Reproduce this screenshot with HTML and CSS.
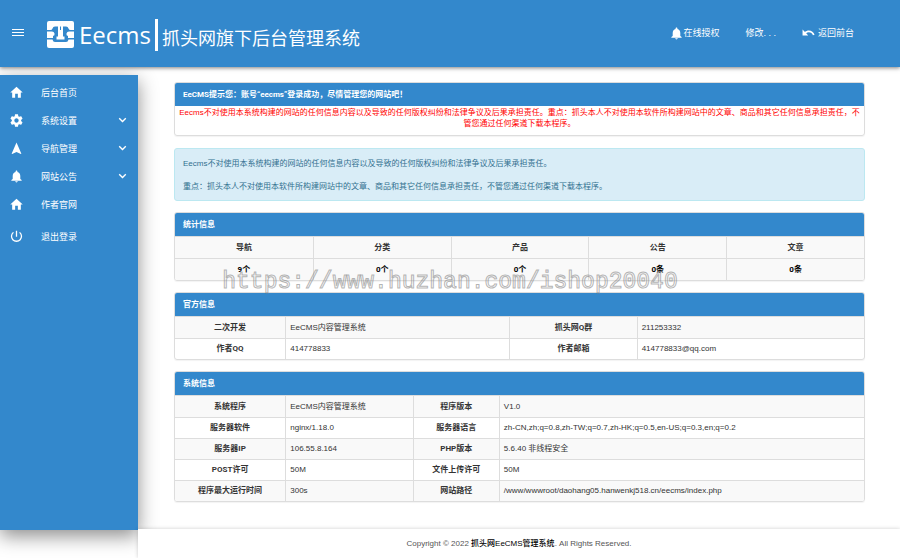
FILE: index.html
```html
<!DOCTYPE html>
<html lang="zh-CN">
<head>
  <meta charset="UTF-8">
  <meta name="viewport" content="width=device-width, initial-scale=1">
  <title>Eecms后台管理系统</title>
  <link rel="stylesheet" href="styles.css">
</head>
<body>
  <!-- Icons -->
  <svg width="0" height="0" class="sprite">
    <symbol id="i-home" viewBox="0 0 24 24"><path d="M9.500 21.500v-7h5v7h5.500V12h3.500L12 1.500.5 12H4v9.500z"/></symbol>
    <symbol id="i-gear" viewBox="1.500 1.500 21 21"><path d="M19.43 12.98c.04-.32.07-.64.07-.98s-.03-.66-.07-.98l2.11-1.65c.19-.15.24-.42.12-.64l-2-3.46c-.12-.22-.39-.3-.61-.22l-2.49 1c-.52-.4-1.08-.73-1.69-.98l-.38-2.65C14.46 2.18 14.25 2 14 2h-4c-.25 0-.46.18-.49.42l-.38 2.65c-.61.25-1.17.59-1.69.98l-2.49-1c-.23-.09-.49 0-.61.22l-2 3.46c-.13.22-.07.49.12.64l2.11 1.65c-.04.32-.07.65-.07.98s.03.66.07.98l-2.11 1.65c-.19.15-.24.42-.12.64l2 3.46c.12.22.39.3.61.22l2.49-1c.52.4 1.08.73 1.69.98l.38 2.65c.03.24.24.42.49.42h4c.25 0 .46-.18.49-.42l.38-2.65c.61-.25 1.17-.59 1.69-.98l2.49 1c.23.09.49 0 .61-.22l2-3.46c.12-.22.07-.49-.12-.64l-2.11-1.65zM12 15.5c-1.93 0-3.5-1.57-3.5-3.5s1.57-3.5 3.5-3.5 3.5 1.57 3.5 3.5-1.57 3.5-3.5 3.5z"/></symbol>
    <symbol id="i-nav" viewBox="0 0 24 24"><path d="M12 1 3 21.500l1 .8 8-4 8 4 1-.8z"/></symbol>
    <symbol id="i-bell" viewBox="0 0 24 24"><path d="M12 23c1.300 0 2.300-1 2.300-2.200H9.700C9.700 22 10.700 23 12 23zm7-6.500V10.500c0-3.400-2.300-6.200-5.300-6.900V2.700C13.700 1.800 12.900 1 12 1s-1.700.8-1.700 1.700v.9C7.300 4.300 5 7.100 5 10.500v6L2.500 18.500v1.200h19v-1.200z"/></symbol>
    <symbol id="i-power" viewBox="0 0 24 24"><path d="M13.200 1.500h-2.400v11h2.400zM18.500 3.500l-1.700 1.700A8 8 0 1 1 7.200 5.200L5.500 3.500A10.400 10.400 0 1 0 18.500 3.500z"/></symbol>
    <symbol id="i-undo" viewBox="0 0 24 24"><path d="M12.500 6.500c-2.700 0-5.100 1-7 2.700L1 4.800V15.500h10.500L7.700 11.700c1.400-1.200 3-1.900 5-1.900 3.500 0 6.300 2.200 7.500 5.400l3-1C21.600 9.700 17.500 6.500 12.500 6.500z"/></symbol>
    <symbol id="i-down" viewBox="0 0 24 24"><path d="M4.500 4.500 12 12l7.500-7.500L22 7 12 17 2 7z"/></symbol>
  </svg>

  <header class="topbar">
    <button type="button" class="menu-btn" aria-label="菜单"><span></span><span></span><span></span></button>
    <a href="#" class="brand">
      <svg class="brand-mark" viewBox="0 0 27 27">
        <rect width="27" height="27" rx="2" fill="#fff"/>
        <path d="M0 9h3.500Q5 9 5.500 7.500 6 5.500 8 5.500h3V15.500H9.500v3h8v-3H16V5.500h3q2 0 2.500 2Q22 9 23.500 9H27v1.500h-5q-2 0-2.500 2T21 15v2h6v1.500h-5.500q-.5 2.500-2.500 2.500H8q-2 0-2.500-2.500H0V17h6v-2q2-.5 1.500-2.500T5 10.500H0z" fill="#38c"/>
        <path d="M13.500 5.500v3.500" stroke="#38c" stroke-width="1"/>
      </svg>
      <span class="brand-name">Eecms</span>
      <span class="brand-title">抓头网旗下后台管理系统</span>
    </a>
    <nav class="topnav">
      <a href="#"><svg class="icon"><use href="#i-bell"/></svg>在线授权</a>
      <a href="#">修改. . .</a>
      <a href="#" class="back"><svg class="icon"><use href="#i-undo"/></svg>返回前台</a>
    </nav>
  </header>

  <div class="layout">
    <aside class="sidebar">
      <ul>
        <li><a href="#"><svg class="icon"><use href="#i-home"/></svg><span>后台首页</span></a></li>
        <li><a href="#"><svg class="icon"><use href="#i-gear"/></svg><span>系统设置</span><svg class="arrow"><use href="#i-down"/></svg></a></li>
        <li><a href="#"><svg class="icon"><use href="#i-nav"/></svg><span>导航管理</span><svg class="arrow"><use href="#i-down"/></svg></a></li>
        <li><a href="#"><svg class="icon"><use href="#i-bell"/></svg><span>网站公告</span><svg class="arrow"><use href="#i-down"/></svg></a></li>
        <li><a href="#"><svg class="icon"><use href="#i-home"/></svg><span>作者官网</span></a></li>
        <li class="logout"><a href="#"><svg class="icon"><use href="#i-power"/></svg><span>退出登录</span></a></li>
      </ul>
    </aside>

    <div class="page">
      <main class="content">
        <section class="panel">
          <h3>EeCMS提示您：账号“eecms”登录成功，尽情管理您的网站吧！</h3>
          <p class="notice">Eecms不对使用本系统构建的网站的任何信息内容以及导致的任何版权纠纷和法律争议及后果承担责任。重点：抓头本人不对使用本软件所构建网站中的文章、商品和其它任何信息承担责任，不管您通过任何渠道下载本程序。</p>
        </section>

        <div class="alert">
          <p>Eecms不对使用本系统构建的网站的任何信息内容以及导致的任何版权纠纷和法律争议及后果承担责任。</p>
          <p>重点：抓头本人不对使用本软件所构建网站中的文章、商品和其它任何信息承担责任，不管您通过任何渠道下载本程序。</p>
        </div>

        <!-- Statistics -->
        <section class="panel">
          <h3>统计信息</h3>
          <table class="stats">
            <thead>
              <tr><th>导航</th><th>分类</th><th>产品</th><th>公告</th><th>文章</th></tr>
            </thead>
            <tbody>
              <tr><td>9个</td><td>0个</td><td>0个</td><td>0条</td><td>0条</td></tr>
            </tbody>
          </table>
        </section>

        <!-- Official info -->
        <section class="panel">
          <h3>官方信息</h3>
          <table class="info official">
            <tr><th>二次开发</th><td>EeCMS内容管理系统</td><th>抓头网Q群</th><td>211253332</td></tr>
            <tr><th>作者QQ</th><td>414778833</td><th>作者邮箱</th><td>414778833@qq.com</td></tr>
          </table>
        </section>

        <!-- System info -->
        <section class="panel">
          <h3>系统信息</h3>
          <table class="info system">
            <tr><th>系统程序</th><td>EeCMS内容管理系统</td><th>程序版本</th><td>V1.0</td></tr>
            <tr><th>服务器软件</th><td>nginx/1.18.0</td><th>服务器语言</th><td>zh-CN,zh;q=0.8,zh-TW;q=0.7,zh-HK;q=0.5,en-US;q=0.3,en;q=0.2</td></tr>
            <tr><th>服务器IP</th><td>106.55.8.164</td><th>PHP版本</th><td>5.6.40 非线程安全</td></tr>
            <tr><th>POST许可</th><td>50M</td><th>文件上传许可</th><td>50M</td></tr>
            <tr><th>程序最大运行时间</th><td>300s</td><th>网站路径</th><td>/www/wwwroot/daohang05.hanwenkj518.cn/eecms/index.php</td></tr>
          </table>
        </section>
      </main>

      <footer class="footer">Copyright © 2022 <a href="#">抓头网EeCMS管理系统</a>. All Rights Reserved.</footer>
    </div>
  </div>

  <div class="watermark">https://www.huzhan.com/ishop20040</div>
</body>
</html>
```
FILE: styles.css
```css
* {
  box-sizing: border-box;
}
body {
  margin: 0;
  min-height: 100vh;
  display: flex;
  flex-direction: column;
  position: relative;
  font-family: "Liberation Sans", "Noto Sans CJK SC", sans-serif;
  font-size: 8px;
  line-height: 11px;
  color: #333;
  background: #fff;
}
a {
  color: inherit;
  text-decoration: none;
}
p, h3, ul {
  margin: 0;
  padding: 0;
}
.sprite {
  position: absolute;
}
.icon {
  width: 13px;
  height: 13px;
  fill: currentColor;
}

/* Top bar */
.topbar {
  position: relative;
  z-index: 2;
  display: flex;
  align-items: center;
  height: 67px;
  padding: 0 46px 0 12px;
  background: #38c;
  color: #fff;
  box-shadow: 0 1px 4px rgba(0, 0, 0, 0.5);
}
.menu-btn {
  display: flex;
  flex-direction: column;
  gap: 2px;
  width: 12px;
  padding: 0 0 2px;
  border: 0;
  background: none;
}
.menu-btn span {
  height: 1px;
  background: #fff;
}
.brand {
  display: flex;
  align-items: center;
  margin-left: 23px;
  padding-top: 2px;
}
.brand-mark {
  width: 27px;
  height: 27px;
}
.brand-name {
  padding: 0 4px 0 5px;
  border-right: 3px solid #fff;
  font-family: "Open Sans", sans-serif;
  font-size: 24px;
  line-height: 32px;
}
.brand-title {
  padding: 8px 0 0 4px;
  font-size: 18px;
  line-height: 20px;
}
.topnav {
  display: flex;
  gap: 26px;
  margin-left: auto;
  font-size: 9px;
}
.topnav a {
  display: flex;
  align-items: center;
}
.topnav .back {
  gap: 3px;
}

/* Sidebar */
.layout {
  flex: 1;
  display: flex;
}
.sidebar {
  width: 138px;
  flex-shrink: 0;
  margin: 8px 0 28px;
  padding-top: 4px;
  background: #38c;
  color: #fff;
  box-shadow: 0 6px 18px rgba(0, 0, 0, 0.45);
}
.sidebar ul {
  list-style: none;
}
.sidebar a {
  display: flex;
  align-items: center;
  height: 28px;
  padding: 0 11px 0 10px;
  font-size: 9px;
}
.sidebar span {
  margin-left: 18px;
}
.sidebar .icon {
  margin-bottom: 2px;
}
.sidebar .arrow {
  width: 9px;
  height: 9px;
  margin: 0 0 2px auto;
  fill: currentColor;
}
.sidebar .logout {
  margin-top: 4px;
}

/* Content */
.page {
  flex: 1;
  min-width: 0;
  display: flex;
  flex-direction: column;
}
.content {
  flex: 1;
  padding: 15px 35px 14px 36px;
}
.panel {
  margin-bottom: 11px;
  border: 1px solid #ddd;
  border-radius: 3px;
  overflow: hidden;
  box-shadow: 0 1px 1px rgba(0, 0, 0, 0.05);
}
.panel h3 {
  padding: 6px 8px;
  background: #38c;
  color: #fff;
  font-family: Roboto, "Noto Sans CJK SC", sans-serif;
  font-size: 8px;
  line-height: 11px;
}
.notice {
  padding: 1px 1px 6px;
  color: #f00;
  text-align: center;
}
.alert {
  margin: 12px 0 11px;
  padding: 9px 8px 8px;
  border: 1px solid #bce8f1;
  border-radius: 3px;
  background: #d9edf7;
  color: #31708f;
}
.alert p + p {
  margin-top: 12px;
}

table {
  width: 100%;
  table-layout: fixed;
  border-spacing: 0;
}
th, td {
  padding: 5px 4px;
  border-top: 1px solid #ddd;
  border-left: 1px solid #ddd;
  line-height: 10px;
}
th:first-child, td:first-child {
  border-left: 0;
}
th, .stats td {
  text-align: center;
  font-family: Roboto, "Noto Sans CJK SC", sans-serif;
  font-weight: bold;
}
.stats tr, .info tr:nth-child(odd) {
  background: #f9f9f9;
}
.stats th, .stats td {
  line-height: 11px;
}
.stats td {
  color: #000;
}
.info th:first-child {
  width: 16%;
}
.info tr:first-child th, .info tr:first-child td {
  line-height: 11px;
}
.official td:nth-child(2) {
  width: 32.5%;
}
.official td:nth-child(4) {
  width: 33%;
}
.system td:nth-child(2) {
  width: 18.5%;
}
.system td:nth-child(4) {
  width: 53%;
}

.footer {
  padding: 9px 0;
  background: #fff;
  text-align: center;
  color: #555;
  box-shadow: 0 0 4px rgba(0, 0, 0, 0.2);
}
.footer a {
  color: #000;
  font-weight: 500;
}

/* Outlined site address over the page */
.watermark {
  position: absolute;
  top: 267px;
  left: 0;
  right: 0;
  text-align: center;
  font-family: "Liberation Mono", monospace;
  font-size: 23px;
  line-height: 30px;
  color: transparent;
  -webkit-text-stroke: 1px rgba(130, 130, 130, 0.6);
  pointer-events: none;
}
```
